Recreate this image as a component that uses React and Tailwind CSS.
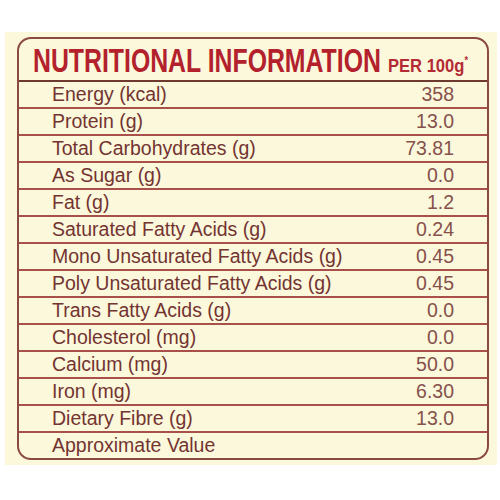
import React from "react";

const rows = [
  ["Energy (kcal)", "358"],
  ["Protein (g)", "13.0"],
  ["Total Carbohydrates (g)", "73.81"],
  ["As Sugar (g)", "0.0"],
  ["Fat (g)", "1.2"],
  ["Saturated Fatty Acids (g)", "0.24"],
  ["Mono Unsaturated Fatty Acids (g)", "0.45"],
  ["Poly Unsaturated Fatty Acids (g)", "0.45"],
  ["Trans Fatty Acids (g)", "0.0"],
  ["Cholesterol (mg)", "0.0"],
  ["Calcium (mg)", "50.0"],
  ["Iron (mg)", "6.30"],
  ["Dietary Fibre (g)", "13.0"],
];

export default function App() {
  return (
    <div className="w-[500px] h-[500px] bg-white pt-[32px] pl-[5px]" style={{ fontFamily: '"Liberation Sans", Arial, sans-serif' }}>
      <div className="w-[492px] h-[433px] bg-[#fcf8dc] pt-[5px] pl-[12px]">
        <div className="w-[472px] h-[423px] border-2 border-[#8b4a40] rounded-[14px] flex flex-col overflow-hidden">
          <div className="h-[43px] shrink-0 border-b-2 border-[#6e3a30] flex items-baseline pt-[4px] pl-[14px]">
            <div className="w-[355px] shrink-0 whitespace-nowrap">
              <span className="inline-block origin-left scale-x-[0.73] text-[34px] leading-none font-bold text-[#b3222c]">
                NUTRITIONAL INFORMATION
              </span>
            </div>
            <span className="inline-block origin-left scale-x-[0.92] text-[18px] leading-none font-bold text-[#b42a34] whitespace-nowrap">
              PER 100g<span className="text-[10px] align-top relative -top-[1px]">*</span>
            </span>
          </div>
          {rows.map(([label, value]) => (
            <div key={label} className="h-[27px] shrink-0 border-b-2 border-[#a9504a] flex items-center justify-between pl-[33px] pr-[33px] text-[19.5px] leading-none">
              <span className="text-[#733431]">{label}</span>
              <span className="text-[#86514b]">{value}</span>
            </div>
          ))}
          <div className="flex-1 flex items-center pl-[33px] text-[19.5px] leading-none">
            <span className="text-[#733431]">Approximate Value</span>
          </div>
        </div>
      </div>
    </div>
  );
}
